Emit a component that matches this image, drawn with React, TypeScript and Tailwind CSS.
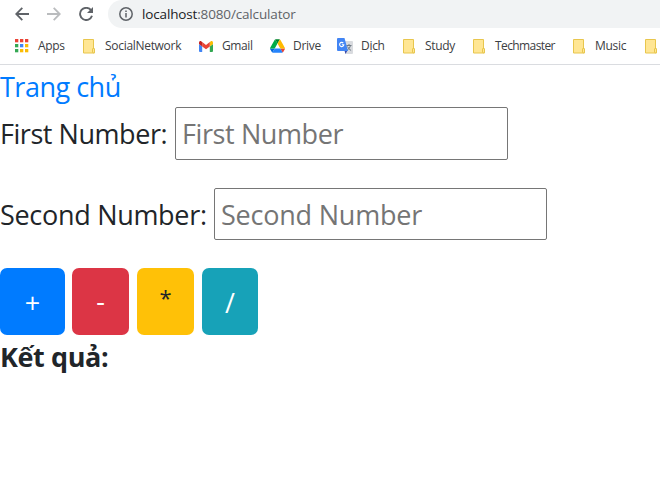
import type { ReactNode } from 'react';

const appColors = ['#ea4335', '#ea4335', '#ea4335', '#34a853', '#4285f4', '#fbbc04', '#34a853', '#fbbc04', '#fbbc04'];

function Apps() {
  return (
    <svg width="14" height="14" viewBox="0 0 14 14">
      {appColors.map((c, i) => (
        <rect key={i} x={(i % 3) * 5} y={Math.floor(i / 3) * 5} width="3.300" height="3.300" fill={c} />
      ))}
    </svg>
  );
}

function Folder() {
  return (
    <svg width="13" height="15" viewBox="0 0 13 15">
      <path d="M.5.5h10v9.500h1v4H.5z" fill="#ffe694" stroke="#e8c64d" />
      <path d="M9.500 13.500V10q0-.5.5-.5h1q.5 0 .5.5v3q0 .8-.8.8z" fill="#ffe694" stroke="#e8c64d" />
    </svg>
  );
}

function Gmail() {
  return (
    <svg width="14" height="11" viewBox="0 0 14 11">
      <path d="M0 3l3.200 2.400V11H1a1 1 0 01-1-1z" fill="#4285f4" />
      <path d="M14 3l-3.200 2.400V11H13a1 1 0 001-1z" fill="#34a853" />
      <path d="M10.800 1l.8-.6C12.600-.3 14 .3 14 1.700V3l-3.200 2.400z" fill="#fbbc04" />
      <path d="M3.200 5.400V1L7 3.900 10.800 1v4.400L7 8.300z" fill="#ea4335" />
      <path d="M0 3V1.700C0 .3 1.400-.3 2.400.4l.8.6v4.400z" fill="#c5221f" />
    </svg>
  );
}

function Drive() {
  return (
    <svg width="15" height="14" viewBox="0 0 87.3 78">
      <path d="M6.600 66.850l3.850 6.650c.8 1.400 1.950 2.500 3.300 3.300L27.500 53H0c0 1.550.4 3.100 1.200 4.500z" fill="#0066da" />
      <path d="M43.650 25L29.900 1.200c-1.350.8-2.500 1.900-3.300 3.300L1.200 48.500A9 9 0 000 53h27.500z" fill="#00ac47" />
      <path d="M73.550 76.800c1.350-.8 2.500-1.900 3.300-3.300l9.250-16c.8-1.400 1.200-2.950 1.200-4.500H59.800l5.850 11.500z" fill="#ea4335" />
      <path d="M43.650 25L57.400 1.200C56.050.4 54.500 0 52.900 0H34.400c-1.600 0-3.150.45-4.500 1.200z" fill="#00832d" />
      <path d="M59.800 53H27.500L13.750 76.800c1.350.8 2.900 1.200 4.500 1.200h50.800c1.600 0 3.150-.45 4.500-1.200z" fill="#2684fc" />
      <path d="M73.400 26.500L60.700 4.500c-.8-1.400-1.950-2.500-3.300-3.300L43.650 25 59.800 53h27.450c0-1.550-.4-3.100-1.200-4.500z" fill="#ffba00" />
    </svg>
  );
}

function Translate() {
  return (
    <svg width="16" height="16" viewBox="0 0 16 16">
      <path d="M5 3h10q1 0 1 1v11q0 1-1 1H8.500z" fill="#d9dbdf" />
      <path d="M9.300 7.500h5.200M12 6v1.500M13.500 7.500q-.5 3-3.500 4.800M10.500 8.500q1 2.500 3.600 4" fill="none" stroke="#6f7a85" />
      <path d="M7.500 12.500h3L8.500 16z" fill="#3949ab" />
      <path d="M1 0h6.500l3.500 13H1q-1 0-1-1V1q0-1 1-1z" fill="#4285f4" />
      <path d="M6.300 5.100A2.100 2.100 0 106.800 6.700H4.800" fill="none" stroke="#fff" strokeWidth="1.100" />
    </svg>
  );
}

function Bookmark({ icon, label, className, text }: { icon: ReactNode; label: string; className: string; text: string }) {
  return (
    <div className={`flex h-full shrink-0 items-center ${className}`}>
      <span className="shrink-0">{icon}</span>
      <span className={text}>{label}</span>
    </div>
  );
}

function Field({ label, placeholder, labelClass, inputClass }: { label: string; placeholder: string; labelClass: string; inputClass: string }) {
  return (
    <div className="flex items-center">
      <label className={`shrink-0 ${labelClass}`}>{label}</label>
      <input placeholder={placeholder} className={`w-[333px] shrink-0 rounded-[2px] border border-[#767676] bg-white pl-[6px] outline-none placeholder:text-[#757575] ${inputClass}`} />
    </div>
  );
}

export default function App() {
  return (
    <div className="h-[498px] w-[660px] overflow-hidden bg-white font-['Open_Sans','Noto_Sans',sans-serif] whitespace-nowrap text-[#212529]">
      <header className="flex h-7 items-center text-[#5f6368]">
        <svg className="ml-[15px] shrink-0" width="14" height="14" viewBox="0 0 14 14" fill="none" stroke="#5f6368" strokeWidth="1.800">
          <path d="M14 7H1.500M7.300.8L1.200 7l6.100 6.200" />
        </svg>
        <svg className="ml-[18px] shrink-0" width="14" height="14" viewBox="0 0 14 14" fill="none" stroke="#babcbe" strokeWidth="1.800">
          <path d="M0 7h12.500M6.700.8L12.800 7l-6.100 6.200" />
        </svg>
        <svg className="ml-[18px] shrink-0" width="14" height="14" viewBox="0 0 14 14">
          <path d="M12 3.200A6.100 6.100 0 1013 8.800" fill="none" stroke="#5f6368" strokeWidth="1.900" />
          <path d="M14 0v6H8z" fill="#5f6368" />
        </svg>
        <div className="ml-[15px] flex h-7 flex-1 items-center rounded-l-full bg-[#f1f3f4] pl-[11px]">
          <svg width="14" height="14" viewBox="0 0 14 14">
            <circle cx="7" cy="7" r="6.200" fill="none" stroke="#5f6368" strokeWidth="1.500" />
            <path d="M7 6v4.500M7 3.500V5" stroke="#5f6368" strokeWidth="1.500" />
          </svg>
          <span className="ml-[9px] text-[13.500px] leading-7 tracking-[-0.150px]"><span className="text-[#202124]">localhost</span>:8080/calculator</span>
        </div>
      </header>
      <nav className="flex h-[37px] items-center overflow-hidden border-b border-[#dadce0] pl-[15px] text-[12px] text-[#3c4043]">
        <Bookmark icon={<Apps />} label="Apps" className="w-[68px]" text="ml-[9px] tracking-[-0.300px]" />
        <Bookmark icon={<Folder />} label="SocialNetwork" className="w-[116px]" text="ml-[9px] tracking-[-0.300px]" />
        <Bookmark icon={<Gmail />} label="Gmail" className="w-[71px]" text="ml-[9px] tracking-[-0.400px]" />
        <Bookmark icon={<Drive />} label="Drive" className="w-[67px]" text="ml-[8px] tracking-[-0.300px]" />
        <Bookmark icon={<Translate />} label="Dịch" className="w-[66px]" text="ml-[8px] tracking-[-0.300px]" />
        <Bookmark icon={<Folder />} label="Study" className="w-[70px]" text="ml-[9px] tracking-[-0.300px]" />
        <Bookmark icon={<Folder />} label="Techmaster" className="w-[100px]" text="ml-[9px] tracking-[-0.600px]" />
        <Bookmark icon={<Folder />} label="Music" className="w-[72px]" text="ml-[9px] tracking-[-0.300px]" />
        <Bookmark icon={<Folder />} label="" className="w-[30px]" text="" />
      </nav>
      <main className="text-[27px]">
        <a href="#" className="block h-[42px] leading-[44px] tracking-[-0.500px] text-[#007bff]">Trang chủ</a>
        <Field label="First Number:" placeholder="First Number" labelClass="w-[175px] leading-[53px] tracking-[-0.450px]" inputClass="h-[53px] tracking-[-0.400px]" />
        <div className="h-7" />
        <Field label="Second Number:" placeholder="Second Number" labelClass="w-[214px] pt-[2px] leading-[50px] tracking-[-0.300px]" inputClass="h-[52px] tracking-[-0.220px]" />
        <div className="mt-7 flex h-[67px] text-white">
          <button className="w-[65px] rounded-[7px] bg-[#007bff] pt-[3px]">+</button>
          <button className="ml-[7px] w-[57px] rounded-[7px] bg-[#dc3545]">-</button>
          <button className="ml-2 w-[57px] rounded-[7px] bg-[#ffc107] pb-[8px] text-[22px] text-[#212529]">*</button>
          <button className="ml-2 w-[56px] rounded-[7px] bg-[#17a2b8] pt-[3px]">/</button>
        </div>
        <p className="leading-[44px] font-bold tracking-[-0.400px]">Kết quả:</p>
      </main>
    </div>
  );
}
